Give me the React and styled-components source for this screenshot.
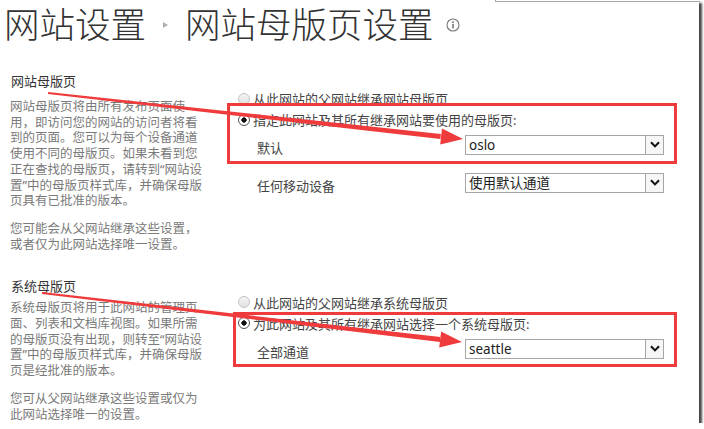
import React from 'react';
import styled, { createGlobalStyle } from 'styled-components';

const GlobalStyle = createGlobalStyle`
  html, body {
    margin: 0;
    padding: 0;
    background: #ffffff;
  }
  body {
    font-family: "Noto Sans", "Noto Sans CJK SC", sans-serif;
  }
`;

const sections = [
  {
    key: 'site',
    title: '网站母版页',
    titleGap: 9,
    paraGap: 8,
    top: 15,
    paras: [
      [
        '网站母版页将由所有发布页面使',
        '用，即访问您的网站的访问者将看',
        '到的页面。您可以为每个设备通道',
        '使用不同的母版页。如果未看到您',
        '正在查找的母版页，请转到“网站设',
        '置”中的母版页样式库，并确保母版',
        '页具有已批准的版本。',
      ],
      ['您可能会从父网站继承这些设置，', '或者仅为此网站选择唯一设置。'],
    ],
    inherit: '从此网站的父网站继承网站母版页',
    choose: '指定此网站及其所有继承网站要使用的母版页:',
    selects: [
      { label: '默认', value: 'oslo', gap: 4.5 },
      { label: '任何移动设备', value: '使用默认通道', gap: 18 },
    ],
  },
  {
    key: 'system',
    title: '系统母版页',
    titleGap: 5,
    paraGap: 12,
    top: 13.5,
    paras: [
      [
        '系统母版页将用于此网站的管理页',
        '面、列表和文档库视图。如果所需',
        '的母版页没有出现，则转至“网站设',
        '置”中的母版页样式库，并确保母版',
        '页是经批准的版本。',
      ],
      ['您可从父网站继承这些设置或仅为', '此网站选择唯一的设置。'],
    ],
    inherit: '从此网站的父网站继承系统母版页',
    choose: '为此网站及其所有继承网站选择一个系统母版页:',
    selects: [{ label: '全部通道', value: 'seattle', gap: 5 }],
  },
];

function App() {
  return (
    <>
      <GlobalStyle />
      <Frame>
        <TopEdge />
        <Header>
          <Crumb>网站设置</Crumb>
          <CrumbArrow />
          <Crumb>网站母版页设置</Crumb>
          <InfoIcon viewBox="0 0 14 14">
            <circle cx="7" cy="7" r="6" fill="none" stroke="#777" strokeWidth="1.1" />
            <circle cx="7" cy="4.2" r="0.9" fill="#666" />
            <rect x="6.3" y="6" width="1.4" height="4.4" fill="#666" />
          </InfoIcon>
        </Header>

        {sections.map((s) => (
          <Section key={s.key}>
            <Side>
              <SideTitle $gap={s.titleGap}>{s.title}</SideTitle>
              {s.paras.map((lines, i) => (
                <Desc key={i} $gap={s.paraGap}>
                  {lines.map((l, j) => (
                    <span key={j}>
                      {l}
                      <br />
                    </span>
                  ))}
                </Desc>
              ))}
            </Side>
            <Options $top={s.top}>
              <RadioRow>
                <Radio />
                {s.inherit}
              </RadioRow>
              <RadioRow>
                <Radio $checked />
                {s.choose}
              </RadioRow>
              {s.selects.map((sel) => (
                <SelectRow key={sel.label} $gap={sel.gap}>
                  <SelectLabel>{sel.label}</SelectLabel>
                  <Select>
                    <SelectValue>{sel.value}</SelectValue>
                    <SelectButton>
                      <svg width="10" height="7" viewBox="0 0 10 7">
                        <path d="M1 1.2 L5 5.4 L9 1.2" fill="none" stroke="#111" strokeWidth="2" />
                      </svg>
                    </SelectButton>
                  </Select>
                </SelectRow>
              ))}
            </Options>
          </Section>
        ))}

        <Marks viewBox="0 0 699 423">
          <rect x="228.5" y="104.5" width="447" height="58" fill="none" stroke="#ef3b3b" strokeWidth="3" />
          <rect x="234.5" y="313.5" width="441" height="52" fill="none" stroke="#ef3b3b" strokeWidth="3" />
          <polygon points="48.1,92 47.9,94 440.4,139.1 440.9,134.1" fill="#ef3b3b" />
          <polygon points="440.2,144.5 463,139 442,128.6" fill="#ef3b3b" />
          <polygon points="42.1,292 41.9,294 439.9,341.9 440.4,336.9" fill="#ef3b3b" />
          <polygon points="439.2,347.4 462,342 441.1,331.5" fill="#ef3b3b" />
        </Marks>
      </Frame>
    </>
  );
}

export default App;

const Frame = styled.div`
  position: relative;
  width: 699px;
  height: 423px;
  background: #ffffff;
  box-shadow: 3px 3px 2px rgba(40, 40, 40, 0.85);
`;

const TopEdge = styled.div`
  position: absolute;
  left: 495px;
  top: 0;
  width: 204px;
  height: 1px;
  border-left: 1px solid #a8a8a8;
  border-bottom: 1px solid #a8a8a8;
`;

const Header = styled.div`
  display: flex;
  align-items: center;
  height: 46px;
  padding: 0 0 0 4px;
  margin-bottom: 27px;
`;

const Crumb = styled.span`
  font-family: "Noto Sans CJK SC", sans-serif;
  font-weight: 300;
  font-size: 35.5px;
  line-height: 46px;
  color: #333;
`;

const CrumbArrow = styled.span`
  width: 0;
  height: 0;
  margin: 4px 17px 0 17px;
  border-top: 3.5px solid transparent;
  border-bottom: 3.5px solid transparent;
  border-left: 5px solid #b0b0b0;
`;

const InfoIcon = styled.svg`
  width: 14px;
  height: 14px;
  margin: 4px 0 0 12px;
`;

const Section = styled.div`
  display: grid;
  grid-template-columns: 238px 1fr;
  & + & {
    margin-top: 26px;
  }
`;

const Side = styled.div`
  padding-left: 10px;
`;

const SideTitle = styled.div`
  font-size: 13px;
  line-height: 17px;
  color: #333;
  padding-left: 1px;
  margin-bottom: ${(p) => p.$gap}px;
`;

const Desc = styled.p`
  margin: 0;
  font-size: 12.5px;
  line-height: 15.7px;
  color: #7a7a7a;
  white-space: nowrap;
  & + & {
    margin-top: ${(p) => p.$gap}px;
  }
`;

const Options = styled.div`
  padding-top: ${(p) => p.$top}px;
`;

const RadioRow = styled.div`
  display: flex;
  align-items: center;
  height: 21px;
  font-size: 13px;
  color: #444;
  white-space: nowrap;
`;

const Radio = styled.span`
  box-sizing: border-box;
  width: 12px;
  height: 12px;
  margin-right: 3px;
  border-radius: 50%;
  border: 1px solid ${(p) => (p.$checked ? '#555' : '#c4c4c4')};
  background: ${(p) =>
    p.$checked
      ? 'radial-gradient(circle, #111 0 2.4px, #fff 2.9px)'
      : 'linear-gradient(#f4f4f4, #e2e2e2)'};
`;

const SelectRow = styled.div`
  display: flex;
  align-items: flex-start;
  height: 20px;
  margin-top: ${(p) => p.$gap}px;
`;

const SelectLabel = styled.span`
  width: 227px;
  padding: 4px 0 0 19px;
  box-sizing: border-box;
  font-size: 13px;
  line-height: 18px;
  color: #444;
  white-space: nowrap;
`;

const Select = styled.div`
  box-sizing: border-box;
  display: flex;
  width: 199px;
  height: 20px;
  border: 1px solid #a6a6a6;
  background: #fff;
`;

const SelectValue = styled.span`
  flex: 1;
  padding-left: 3px;
  font-size: 13.5px;
  line-height: 18px;
  color: #222;
`;

const SelectButton = styled.span`
  box-sizing: border-box;
  display: flex;
  align-items: center;
  justify-content: center;
  width: 18px;
  height: 18px;
  border-left: 1px solid #a6a6a6;
  background: #f6f6f6;
`;

const Marks = styled.svg`
  position: absolute;
  left: 0;
  top: 0;
  width: 699px;
  height: 423px;
  pointer-events: none;
`;
